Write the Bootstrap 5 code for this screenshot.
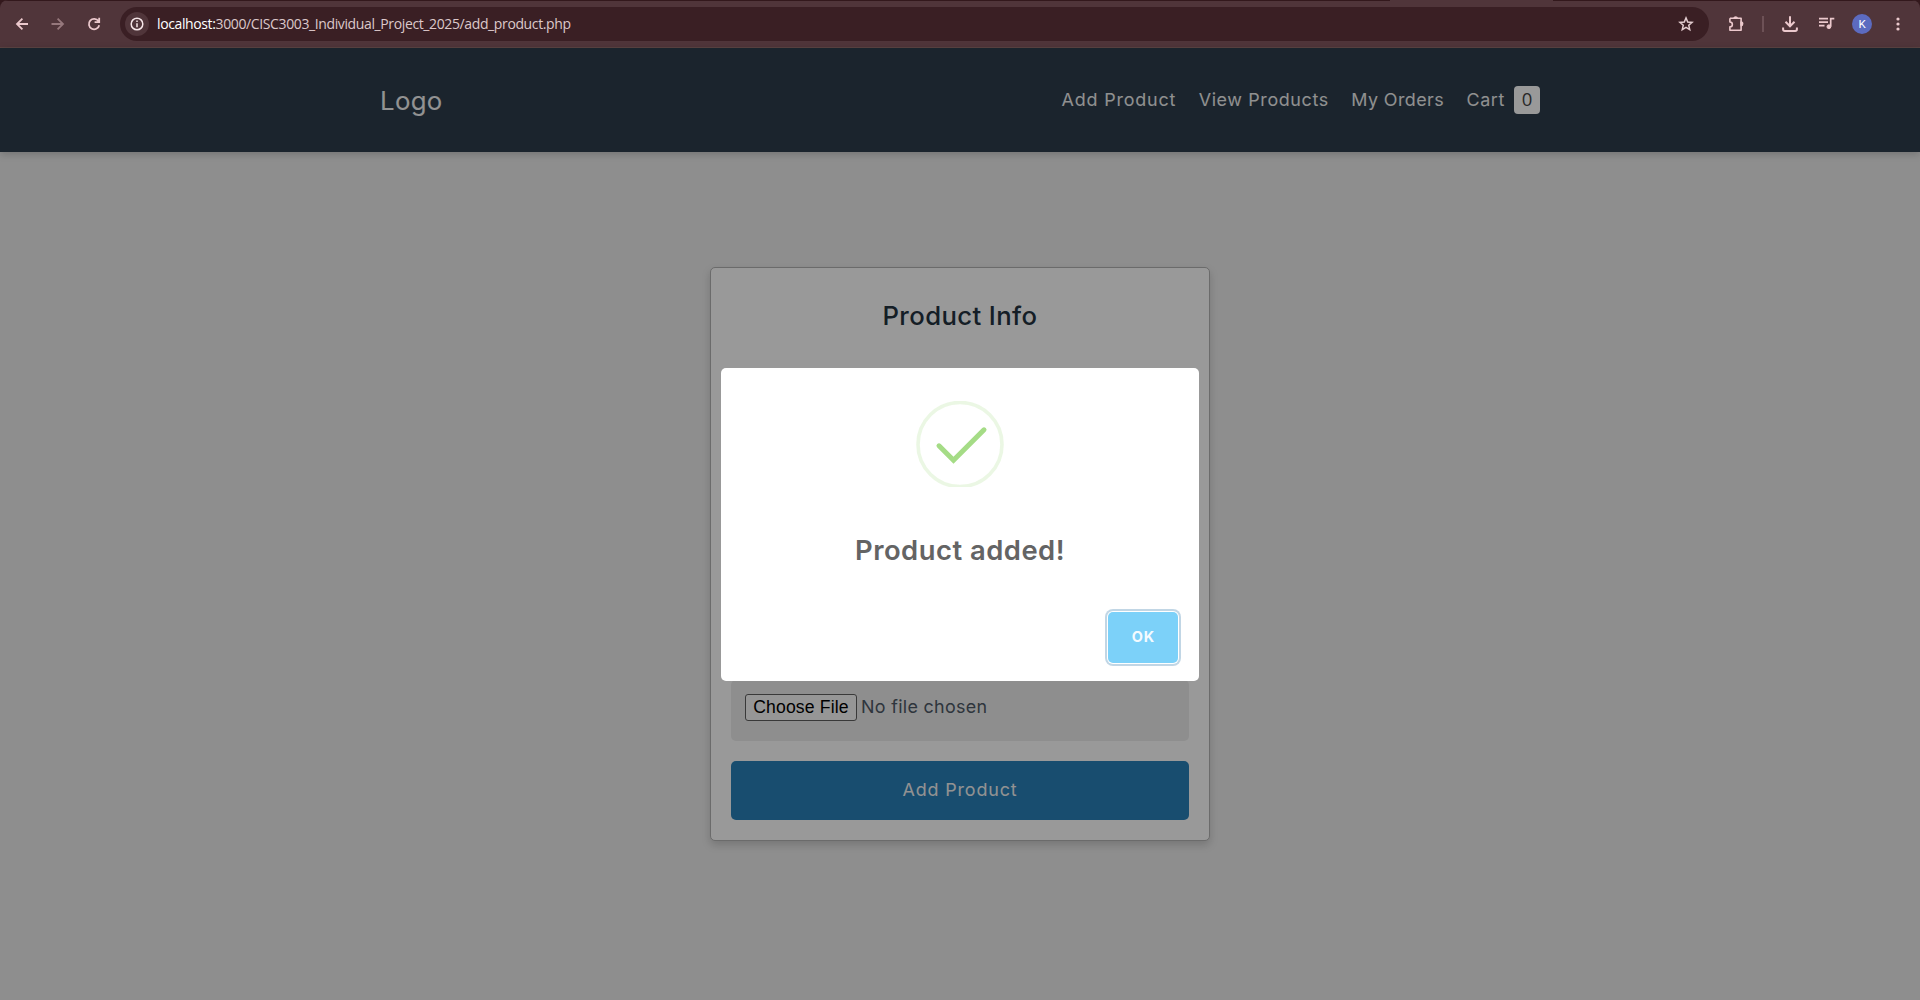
<!DOCTYPE html>
<html lang="en">
<head>
<meta charset="utf-8">
<meta name="viewport" content="width=device-width, initial-scale=1">
<title>Add Product</title>
<link rel="stylesheet" href="https://cdn.jsdelivr.net/npm/bootstrap@5.3.0/dist/css/bootstrap.min.css">
<style>
html, body { height: 100%; overflow: hidden; }
body { font-family: Inter, sans-serif; background: #33181c; line-height: 1; }

/* browser toolbar */
.browser-bar { height: 48px; gap: 16px; padding: 1px 12px; color: #ecc9cd; border-radius: 8px 8px 0 0; border-bottom: 1px solid #5b4443;
  background: linear-gradient(#33181c, #33181c) 0 0 / 1390px 1px no-repeat, linear-gradient(#33181c, #33181c) 100% 0 / 367px 1px no-repeat, #50353a; }
.tool { width: 20px; height: 20px; display: block; flex: none; }
.dimmed { opacity: .45; }
.omnibox { width: 1589px; height: 34px; margin-right: 1px; background: #3a1f24; border-radius: 17px; padding: 0 13px 0 5px; }
.site-info { width: 24px; height: 24px; background: #50353a; }
.address { font: 14px/20px "Open Sans", sans-serif; color: #dcc8ca; white-space: nowrap; letter-spacing: -.379px; margin-left: 8px; }
.address span { color: #fff; }
.divider { width: 2px; height: 16px; background: #6d5156; }
.avatar { width: 20px; height: 20px; background: #5c6bc0; color: #fff; font: 11.5px/20px Roboto, sans-serif; }

/* shop page */
.page { height: 952px; background: #ededed; }
.top-nav { height: 104px; background: #2d3d4c; box-shadow: 0 2px 8px rgba(0,0,0,.2); }
.nav-inner { width: 1160px; }
.brand { font-size: 25.8px; color: #f4f4f4; letter-spacing: .3px; padding-top: 1px; }
.site-links { font-size: 17.9px; gap: 22.4px; letter-spacing: .63px; }
.site-links a { color: #f0f0f0; }
.site-links .ls-add, .submit { letter-spacing: .85px; }
.site-links .ls-orders { letter-spacing: .43px; }
.cart-count { width: 26px; height: 28px; border-radius: 4px; background: #fff; color: #444; font: 18.5px/26px "Open Sans", sans-serif; letter-spacing: 0; margin: -8px 0 -8px 9px; }
.product-card { width: 500px; height: 574px; margin-top: 115px; padding: 20px; border: 1px solid #b2b2b2; border-radius: 5px; background: #fff; box-shadow: 0 4px 8px rgba(0,0,0,.17); }
.card-heading { font-size: 25.7px; line-height: 1; color: #233240; font-weight: 500; letter-spacing: .4px; height: 149px; padding-top: 15px; margin: 0; }
.field { height: 61px; margin-bottom: 20px; background: #ededed; border: 0; border-radius: 5px; }
.file-field { padding: 14px; gap: 4px; }
.choose { font: 17.6px/25px "Liberation Sans", sans-serif; letter-spacing: .16px; height: 27px; width: 112px; padding: 0; border: 1px solid #606060; border-radius: 3px; background: #fbfbfb; color: #000; }
.file-name { font-size: 17.9px; letter-spacing: .32px; color: #4d5966; }
.submit { height: 59px; padding: 0 0 2px; background: #2980b9; color: #f4f4f4; border: 0; border-radius: 5px; font-size: 17.9px; }

/* confirmation dialog */
.overlay { background: rgba(0,0,0,.4); padding-top: 1px; }
.alert-box { width: 478px; height: 313px; background: #fff; border-radius: 5px; padding-top: 33px; }
.alert-title { font-size: 27.4px; line-height: 27px; font-weight: 600; letter-spacing: .5px; color: #646464; margin: 50px 0 48px; }
.ok { width: 70px; height: 51px; margin-right: 21px; padding: 0 0 0 1px; background: #7cd1f9; color: #f4fbff; border: 0; border-radius: 5px; font-size: 14.5px; letter-spacing: .9px; font-weight: 700; box-shadow: 0 0 0 1px #fff, 0 0 0 3px rgba(43,114,165,.29); }
</style>
</head>
<body>
<header class="browser-bar d-flex align-items-center">
  <svg class="tool" viewBox="0 0 20 20" fill="none" stroke="currentColor" stroke-width="1.8"><path d="M16 10H5.300M10.400 4.600L5 10l5.400 5.400"/></svg>
  <svg class="tool dimmed" viewBox="0 0 20 20" fill="none" stroke="currentColor" stroke-width="1.8"><path d="M3.500 10h11.200M9.600 4.600L15 10l-5.400 5.400"/></svg>
  <svg class="tool" viewBox="0 0 20 20" fill="none" stroke="currentColor" stroke-width="1.8"><path d="M14.400 7.100A5.200 5.200 0 1 0 15.200 11.200M15.200 3.800v4.400h-4.600"/></svg>
  <div class="omnibox d-flex align-items-center">
    <div class="site-info rounded-circle d-flex align-items-center justify-content-center">
      <svg class="tool" viewBox="0 0 20 20" fill="none" stroke="#f6e6e8" stroke-width="1.5"><circle cx="10" cy="10" r="5.800"/><path d="M10 9.200v4M10 6.600v1.500"/></svg>
    </div>
    <div class="address"><span>localhost:</span>3000/CISC3003_Individual_Project_2025/add_product.php</div>
    <svg class="tool ms-auto" viewBox="0 0 20 20" fill="none" stroke="#e3cdd0" stroke-width="1.500"><path d="M10 3.900l1.700 4.100 4.400.4-3.350 2.900 1 4.300L10 13.300l-3.750 2.300 1-4.300L3.900 8.400l4.400-.4z"/></svg>
  </div>
  <svg class="tool" viewBox="0 0 20 20" fill="none" stroke="currentColor" stroke-width="1.600" stroke-linejoin="round"><path d="M3.900 4.200H8M11.200 4.200h3.900V8M15.100 11.500v4.800H3.900v-3.400a2.300 2.300 0 0 0 0-4.900V4.200"/><path d="M8 4.200a1.700 1.400 0 0 1 3.300 0zM15.100 8a1.500 1.800 0 0 1 0 3.600z" fill="currentColor"/><path d="M8 4.200h3.200M15.100 8v3.500"/></svg>
  <div class="divider"></div>
  <svg class="tool" viewBox="0 0 20 20" fill="none" stroke="currentColor" stroke-width="2"><path d="M10 2.300v9.600M5.500 7.800L10 12.300l4.500-4.500M3.100 13.500v1.800q0 1.700 1.700 1.700h10.400q1.700 0 1.700-1.700v-1.800"/></svg>
  <svg class="tool" viewBox="0 0 20 20" fill="none" stroke="currentColor" stroke-width="1.700"><path d="M3 4.700h9M3 8.200h9M3 11.700h5.500M14.700 12.600V4.700h3.600"/><circle cx="12.900" cy="12.700" r="1.900" fill="currentColor" stroke-width="1"/></svg>
  <div class="avatar rounded-circle text-center">K</div>
  <svg class="tool" viewBox="0 0 20 20" fill="currentColor"><circle cx="10" cy="5" r="1.600"/><circle cx="10" cy="10" r="1.600"/><circle cx="10" cy="15" r="1.600"/></svg>
</header>

<main class="page position-relative">
  <nav class="top-nav d-flex justify-content-center">
    <div class="nav-inner d-flex align-items-center justify-content-between">
      <a class="brand text-decoration-none" href="#">Logo</a>
      <div class="site-links d-flex align-items-center">
        <a class="text-decoration-none ls-add" href="#">Add Product</a>
        <a class="text-decoration-none" href="#">View Products</a>
        <a class="text-decoration-none ls-orders" href="#">My Orders</a>
        <a class="text-decoration-none d-flex align-items-center" href="#">Cart<span class="cart-count text-center">0</span></a>
      </div>
    </div>
  </nav>

  <form class="product-card mx-auto">
    <h3 class="card-heading text-center">Product Info</h3>
    <input class="field w-100 d-block" type="text">
    <input class="field w-100 d-block" type="text">
    <input class="field w-100 d-block" type="text">
    <div class="field file-field d-flex align-items-start">
      <button class="choose" type="button">Choose File</button>
      <span class="file-name mt-1">No file chosen</span>
    </div>
    <button class="submit w-100" type="button">Add Product</button>
  </form>

  <div class="overlay position-absolute top-0 start-0 w-100 h-100 d-flex align-items-center justify-content-center">
    <div class="alert-box d-flex flex-column align-items-center" role="dialog">
      <svg width="88" height="86" viewBox="0 0 88 86" fill="none"><circle cx="44" cy="43.500" r="42" stroke="#a5dc86" stroke-opacity=".22" stroke-width="3.600"/><path d="M23 44.800L37.500 59.300L68 28.800" stroke="#a5dc86" stroke-width="5" stroke-linecap="round"/></svg>
      <h2 class="alert-title">Product added!</h2>
      <button class="ok align-self-end" type="button">OK</button>
    </div>
  </div>
</main>
<script src="https://cdn.jsdelivr.net/npm/bootstrap@5.3.0/dist/js/bootstrap.bundle.min.js"></script>
</body>
</html>
